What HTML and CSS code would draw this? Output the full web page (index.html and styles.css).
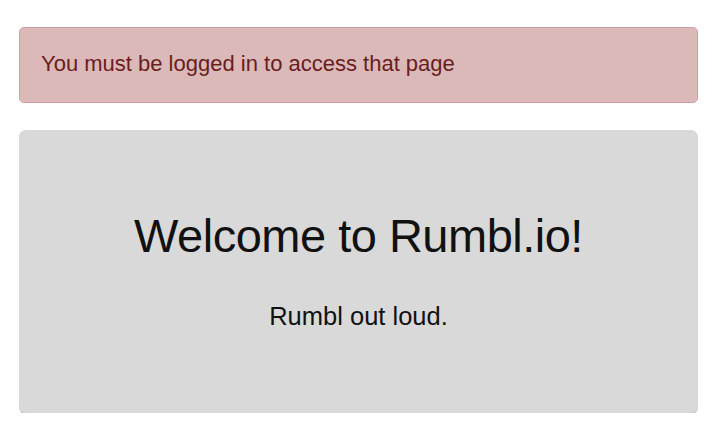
FILE: index.html
```html
<!DOCTYPE html>
<html>
<head>
<meta charset="utf-8">
<link rel="stylesheet" href="styles.css">
</head>
<body>
<div class="container">
  <div class="alert">You must be logged in to access that page</div>
  <div class="jumbotron">
    <h1>Welcome to Rumbl.io!</h1>
    <p>Rumbl out loud.</p>
  </div>
</div>
</body>
</html>
```
FILE: styles.css
```css
html, body {
  margin: 0;
  padding: 0;
  background: #ffffff;
  font-family: "Liberation Sans", Arial, sans-serif;
}
.container {
  padding: 27px 22px 0 19px;
}
.alert {
  box-sizing: border-box;
  height: 76px;
  display: flex;
  align-items: center;
  padding: 0 21px 2px;
  background: #dcb9b9;
  border: 1px solid #d19ea3;
  border-radius: 5px;
  color: #6a1d1d;
  font-size: 22px;
}
.jumbotron {
  box-sizing: border-box;
  margin-top: 27px;
  height: 283px;
  background: #d9d9d9;
  border-radius: 7px;
  box-shadow: 0 1.5px 0 #c6c6c6;
  text-align: center;
  padding-top: 78px;
  color: #111;
}
.jumbotron h1 {
  margin: 0;
  font-weight: normal;
  font-size: 47px;
  line-height: 56px;
  letter-spacing: -0.5px;
}
.jumbotron p {
  margin: 36px 0 0;
  font-size: 25.5px;
  line-height: 32px;
}
```
